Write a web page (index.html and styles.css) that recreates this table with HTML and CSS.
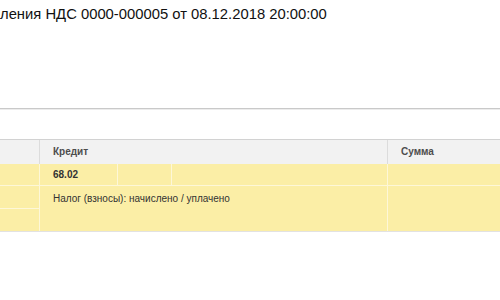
FILE: index.html
```html
<!DOCTYPE html>
<html lang="ru">
<head>
<meta charset="utf-8">
<link rel="stylesheet" href="styles.css">
</head>
<body>
<div class="title"><span class="cut">Отражение начис</span><span>ления НДС 0000-000005 от 08.12.2018 20:00:00</span></div>
<div class="rule"></div>
<div class="grid">
  <div class="h c-left"></div>
  <div class="h c-kred">Кредит</div>
  <div class="h c-sum">Сумма</div>

  <div class="y r1 c1"></div>
  <div class="y r1 c2 b">68.02</div>
  <div class="y r1 c3"></div>
  <div class="y r1 c4"></div>
  <div class="y r1 c5 last"></div>

  <div class="y r2a c1"></div>
  <div class="y r2b c1"></div>
  <div class="y r2 span">Налог (взносы): начислено / уплачено</div>
  <div class="y r2 c5 last"></div>
</div>
</body>
</html>
```
FILE: styles.css
```css
html, body {
  margin: 0;
  background: #fff;
  font-family: "Liberation Sans", Arial, sans-serif;
}
.title {
  display: flex;
  height: 28px;
  line-height: 28px;
  font-size: 14.8px;
  color: #111;
  white-space: nowrap;
}
.cut {
  width: 0;
  overflow: visible;
  direction: rtl;
  display: block;
}
.rule {
  margin-top: 80px;
  height: 1px;
  background: #c9c9c9;
  border-bottom: 1px solid #ececec;
}
.grid {
  margin-top: 29px;
  display: grid;
  grid-template-columns: 40px 78px 54px 216px 112px;
  grid-template-rows: 24px 22px 23px 22px;
  border-top: 1px solid #d2d2d2;
  border-bottom: 1px solid #e2e2e2;
  font-size: 10px;
}
.grid > div {
  box-sizing: border-box;
}
.h {
  background: #f2f2f2;
  color: #4d4d4d;
  font-weight: bold;
  line-height: 24px;
  padding-left: 13px;
  border-right: 1px solid #dcdcdc;
}
.c-kred { grid-column: 2 / 5; }
.c-sum { grid-column: 5; border-right: none; }
.y {
  background: #fbeea6;
  border-right: 1px solid #fdf7d8;
  border-bottom: 1px solid #fdf7d8;
  color: #333;
}
.last { border-right: none; }
.r1 { grid-row: 2; line-height: 22px; }
.c1 { grid-column: 1; }
.c2 { grid-column: 2; padding-left: 13px; }
.c3 { grid-column: 3; }
.c4 { grid-column: 4; }
.c5 { grid-column: 5; }
.b { font-weight: bold; }
.r2a { grid-row: 3; }
.r2b { grid-row: 4; border-bottom: none; }
.r2 { grid-row: 3 / 5; border-bottom: none; }
.span {
  grid-column: 2 / 5;
  padding: 6px 0 0 13px;
  line-height: 13px;
}
```
